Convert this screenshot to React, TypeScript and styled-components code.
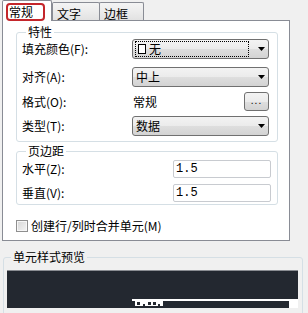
import React from 'react';
import styled, { createGlobalStyle } from 'styled-components';

const GlobalStyle = createGlobalStyle`
  html, body {
    margin: 0;
    background: #f0f0f0;
  }
  * {
    box-sizing: border-box;
  }
  body {
    font-family: 'Noto Sans CJK SC', 'Liberation Sans', sans-serif;
    font-size: 12px;
    color: #000;
  }
`;

const ArrowDown = () => (
  <svg width='7' height='4' viewBox='0 0 7 4'>
    <polygon points='0,0 7,0 3.5,4' fill='#000' />
  </svg>
);

const Combo: React.FC<{ focused?: boolean; children: React.ReactNode }> = ({
  focused,
  children,
}) => (
  <ComboBox>
    <ComboValue $focused={!!focused}>{children}</ComboValue>
    <ComboArrow>
      <ArrowDown />
    </ComboArrow>
  </ComboBox>
);

const App: React.FC = () => {
  return (
    <>
      <GlobalStyle />
      <Dialog>
        <TabStrip>
          <Tab $active $width={50}>
            <TabLabel $marked>常规</TabLabel>
          </Tab>
          <Tab $width={48}>
            <TabLabel>文字</TabLabel>
          </Tab>
          <Tab $width={45}>
            <TabLabel>边框</TabLabel>
          </Tab>
        </TabStrip>

        <Panel>
          <Group>
            <Legend>特性</Legend>
            <Row $label={110} $height={20} $gap={0}>
              <Label>填充颜色(F):</Label>
              <Combo focused>
                <Swatch />
                无
              </Combo>
            </Row>
            <Row $label={110} $height={20} $gap={8}>
              <Label>对齐(A):</Label>
              <Combo>中上</Combo>
            </Row>
            <Row $label={110} $height={19} $gap={5}>
              <Label>格式(O):</Label>
              <FormatCell>
                <span>常规</span>
                <DotsButton>...</DotsButton>
              </FormatCell>
            </Row>
            <Row $label={110} $height={20} $gap={5}>
              <Label>类型(T):</Label>
              <Combo>数据</Combo>
            </Row>
          </Group>

          <Group $margins>
            <Legend>页边距</Legend>
            <Row $label={151} $height={18} $gap={2}>
              <Label>水平(Z):</Label>
              <TextField>1.5</TextField>
            </Row>
            <Row $label={151} $height={18} $gap={6}>
              <Label>垂直(V):</Label>
              <TextField>1.5</TextField>
            </Row>
          </Group>

          <CheckRow>
            <CheckBox />
            <span>创建行/列时合并单元(M)</span>
          </CheckRow>
        </Panel>

        <PreviewGroup>
          <Legend>单元样式预览</Legend>
          <PreviewCanvas>
            <svg width='291' height='37' viewBox='0 0 291 37'>
              <rect x='125' y='28' width='166' height='2' fill='#fff' />
              <rect x='282' y='30' width='9' height='7' fill='#fff' />
              <rect x='128' y='30' width='28' height='5' fill='#fff' />
              <rect x='130' y='31' width='3' height='3' fill='#232830' />
              <rect x='136' y='33' width='2' height='2' fill='#232830' />
              <rect x='141' y='31' width='3' height='3' fill='#232830' />
              <rect x='146' y='31' width='3' height='3' fill='#232830' />
              <rect x='151' y='33' width='2' height='2' fill='#232830' />
            </svg>
          </PreviewCanvas>
        </PreviewGroup>
      </Dialog>
    </>
  );
};

export default App;

const Dialog = styled.div`
  width: 308px;
  height: 313px;
  overflow: hidden;
  background: #f0f0f0;
`;

const TabStrip = styled.div`
  display: flex;
  align-items: flex-end;
  height: 20px;
  padding-left: 2px;
`;

const Tab = styled.div<{ $active?: boolean; $width: number }>`
  position: relative;
  z-index: ${(p) => (p.$active ? 2 : 1)};
  width: ${(p) => p.$width}px;
  height: ${(p) => (p.$active ? 21 : 18)}px;
  margin-bottom: ${(p) => (p.$active ? -1 : 0)}px;
  margin-right: ${(p) => (p.$active ? 0 : -1)}px;
  padding: ${(p) => (p.$active ? '3px 0 0 3px' : '3px 0 0 4px')};
  border: 1px solid #898c95;
  border-bottom: none;
  border-radius: 2px 2px 0 0;
  background: ${(p) =>
    p.$active ? '#fff' : 'linear-gradient(#f4f4f4, #ececec 50%, #e2e2e2)'};
`;

const TabLabel = styled.div<{ $marked?: boolean }>`
  display: flex;
  align-items: center;
  width: ${(p) => (p.$marked ? '39px' : 'auto')};
  height: ${(p) => (p.$marked ? '18px' : '14px')};
  margin-top: ${(p) => (p.$marked ? '-1px' : '1px')};
  padding-left: ${(p) => (p.$marked ? '1px' : '0')};
  line-height: 14px;
  border: ${(p) => (p.$marked ? '2px solid #c4262b' : 'none')};
  border-radius: 4px;
`;

const Panel = styled.div`
  width: 288px;
  height: 221px;
  margin-left: 2px;
  padding: 4px 11px 0 13px;
  background: #fff;
  border: 1px solid #898c95;
`;

const Group = styled.fieldset<{ $margins?: boolean }>`
  min-width: 0;
  margin: ${(p) => (p.$margins ? '2px' : '0')} 0 0 0;
  padding: 0 ${(p) => (p.$margins ? 6 : 8)}px ${(p) => (p.$margins ? 2 : 5)}px 5px;
  border: 1px solid #d5dfe5;
  border-radius: 3px;
`;

const Legend = styled.legend`
  margin-left: 4px;
  padding: 0 2px;
  font-size: 12px;
  line-height: 14px;
  height: 14px;
`;

const Row = styled.div<{ $label: number; $height: number; $gap: number }>`
  display: grid;
  grid-template-columns: ${(p) => p.$label}px 1fr;
  align-items: center;
  height: ${(p) => p.$height}px;
  margin-top: ${(p) => p.$gap}px;
`;

const Label = styled.span`
  white-space: nowrap;
  line-height: 14px;
`;

const ComboBox = styled.div`
  display: flex;
  align-items: stretch;
  height: 100%;
  padding: 1px;
  border: 1px solid #707070;
  border-radius: 3px;
  background: linear-gradient(#f3f3f3, #ebebeb 50%, #dedede 52%, #d3d3d3);
`;

const ComboValue = styled.div<{ $focused: boolean }>`
  flex: 1;
  display: flex;
  align-items: center;
  margin-left: 1px;
  padding-left: 0;
  border: 1px ${(p) => (p.$focused ? 'dotted #000' : 'solid transparent')};
  line-height: 14px;
`;

const ComboArrow = styled.div`
  display: flex;
  align-items: center;
  justify-content: flex-end;
  width: 18px;
  padding-right: 2px;
`;

const Swatch = styled.span`
  width: 8px;
  height: 10px;
  margin: 0 3px 0 2px;
  border: 1px solid #000;
  background: #fff;
`;

const FormatCell = styled.div`
  display: flex;
  align-items: center;
  justify-content: space-between;
  height: 100%;
  padding-left: 1px;
`;

const DotsButton = styled.div`
  display: flex;
  align-items: center;
  justify-content: center;
  width: 25px;
  height: 19px;
  border: 1px solid #707070;
  border-radius: 3px;
  background: linear-gradient(#f3f3f3, #ebebeb 50%, #dedede 52%, #d3d3d3);
  font-family: 'Liberation Sans', sans-serif;
  font-size: 10px;
  letter-spacing: 1px;
  line-height: 10px;
  padding-bottom: 2px;
`;

const TextField = styled.div`
  display: flex;
  align-items: center;
  width: 98px;
  height: 100%;
  padding-left: 2px;
  border: 1px solid #c8cbd0;
  border-radius: 2px;
  background: #fff;
  font-family: 'Liberation Mono', monospace;
  font-size: 12px;
`;

const CheckRow = styled.label`
  display: flex;
  align-items: center;
  gap: 3px;
  height: 16px;
  margin-top: 13px;
  line-height: 14px;
`;

const CheckBox = styled.span`
  width: 12px;
  height: 12px;
  border: 1px solid #8f8f8f;
  background: linear-gradient(135deg, #d6d6d6, #f4f4f4);
  box-shadow: inset 0 0 0 1px #f6f6f6;
`;

const PreviewGroup = styled.fieldset`
  min-width: 0;
  width: 300px;
  height: 80px;
  margin: 9px 0 0 3px;
  padding: 6px 3px 0 3px;
  border: 1px solid #d5dfe5;
  border-radius: 3px;
`;

const PreviewCanvas = styled.div`
  width: 291px;
  height: 38px;
  background: #232830;
  border-top: 1px solid #8a8d92;
  line-height: 0;
`;
